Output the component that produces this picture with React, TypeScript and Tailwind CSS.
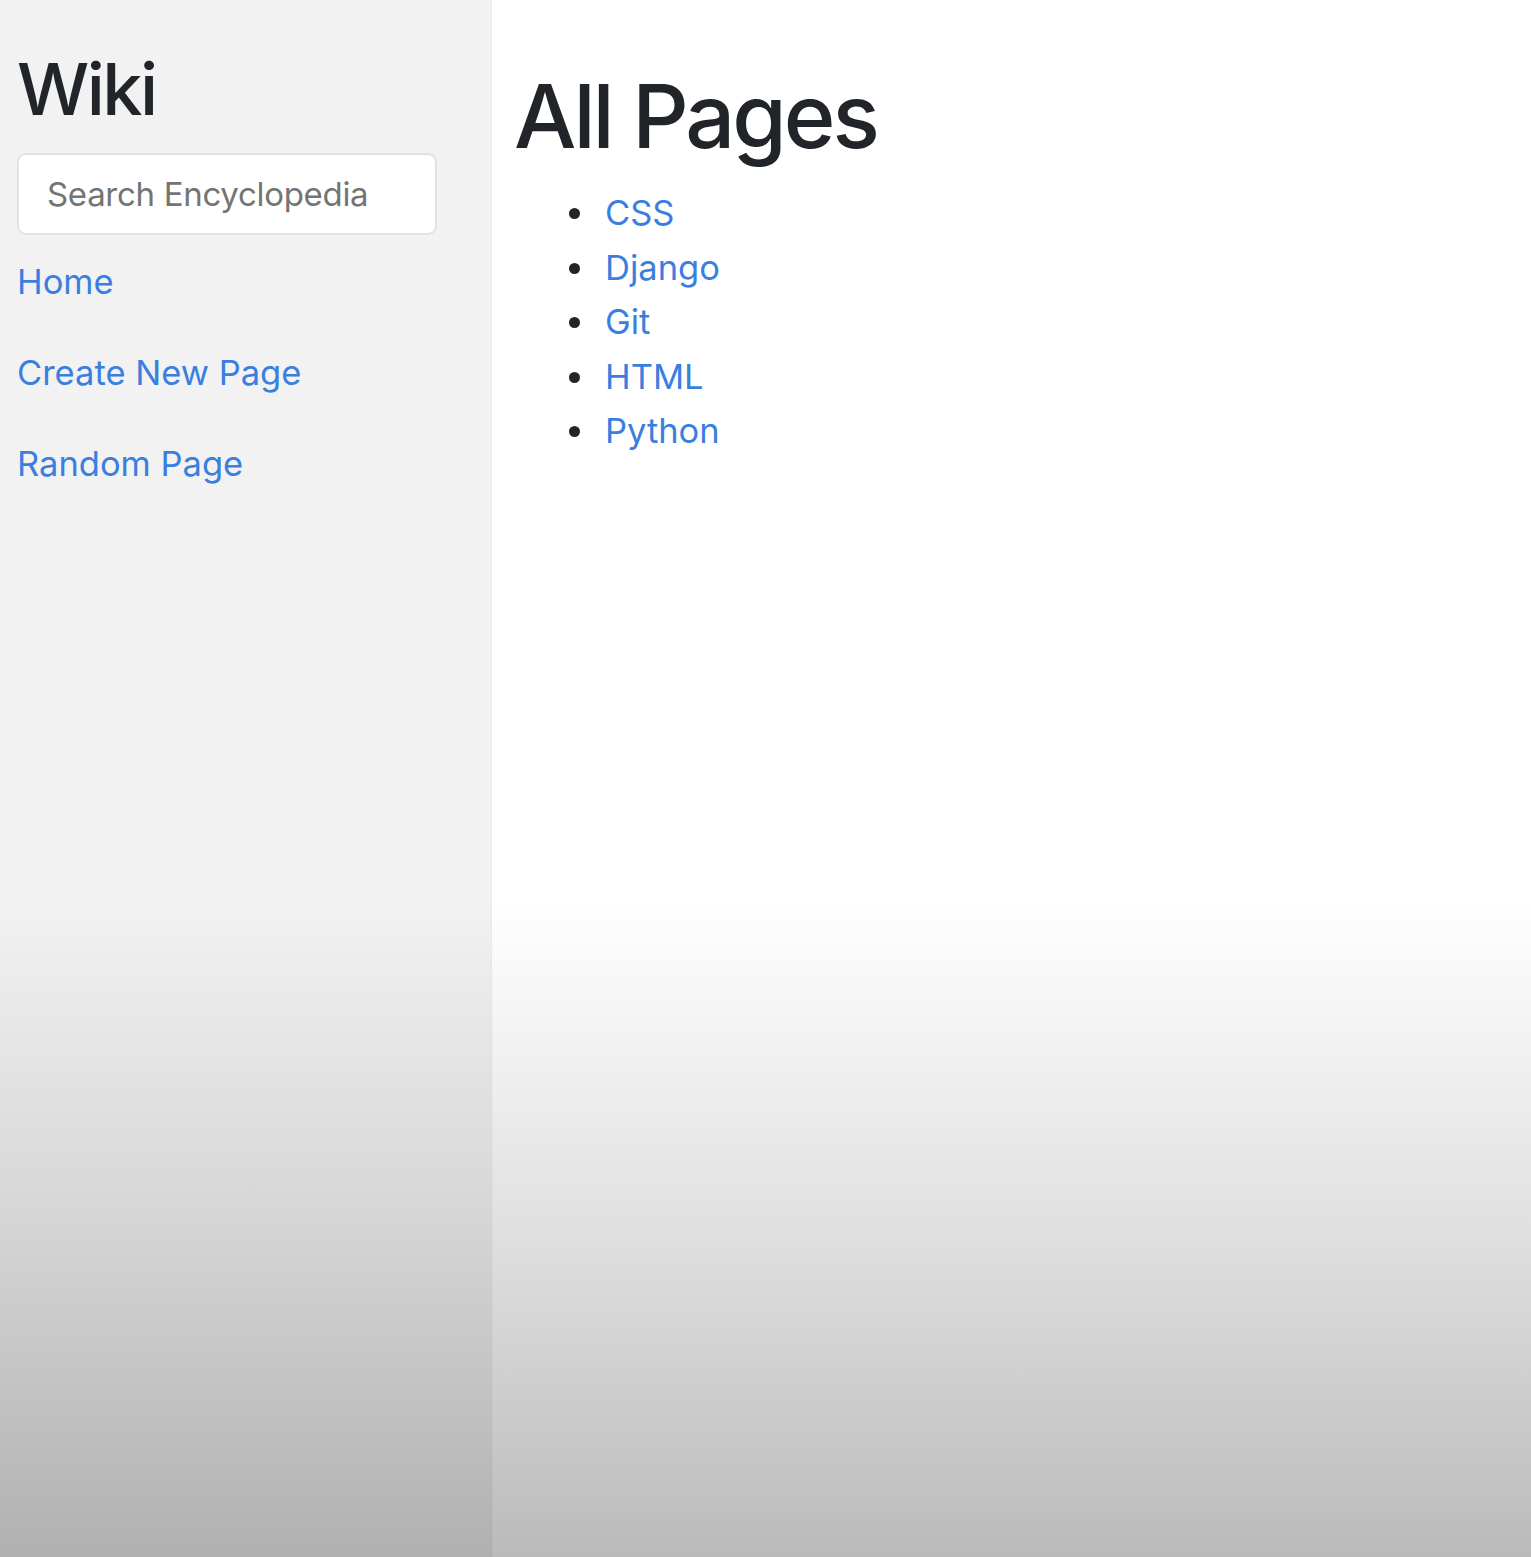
export default function App() {
  const pages = ["CSS", "Django", "Git", "HTML", "Python"];

  return (
    <div className="relative min-h-[1557px] flex font-['Inter',_'Liberation_Sans',_sans-serif] text-[#212529]">
      <div className="w-[492px] shrink-0 bg-[#f2f2f2] pt-[45px] px-[17px] border-r border-[#ececec]">
        <h2 className="text-[72px] font-medium leading-[88px] tracking-[-2.5px] mb-[20px]">Wiki</h2>
        <input
          type="text"
          placeholder="Search Encyclopedia"
          className="w-[420px] h-[82px] bg-white border-2 border-[#e2e2e2] rounded-[9px] px-[28px] text-[33px] tracking-[-0.3px] placeholder:text-[#747474] outline-none"
        />
        <div className="mt-[19px] flex flex-col gap-[36px] text-[34.5px] leading-[55px] text-[#3a7fe0]">
          <a href="#">Home</a>
          <a href="#">Create New Page</a>
          <a href="#">Random Page</a>
        </div>
      </div>

      <div className="flex-1 bg-white pt-[61px] pl-[22px]">
        <h1 className="text-[88px] font-medium leading-[110px] tracking-[-3px] mb-[15px]">All Pages</h1>
        <ul className="list-disc pl-[84px] text-[34.5px] leading-[54.6px] marker:text-[#212529]">
          {pages.map((p) => (
            <li key={p} className="pl-[7px]">
              <a href="#" className="text-[#3a7fe0]">
                {p}
              </a>
            </li>
          ))}
        </ul>
      </div>

      {/* dim overlay at the bottom of the frame */}
      <div className="pointer-events-none absolute left-0 right-0 top-[900px] bottom-0 bg-gradient-to-b from-transparent via-[rgba(0,0,0,0.12)] to-[rgba(0,0,0,0.27)]" />
    </div>
  );
}
